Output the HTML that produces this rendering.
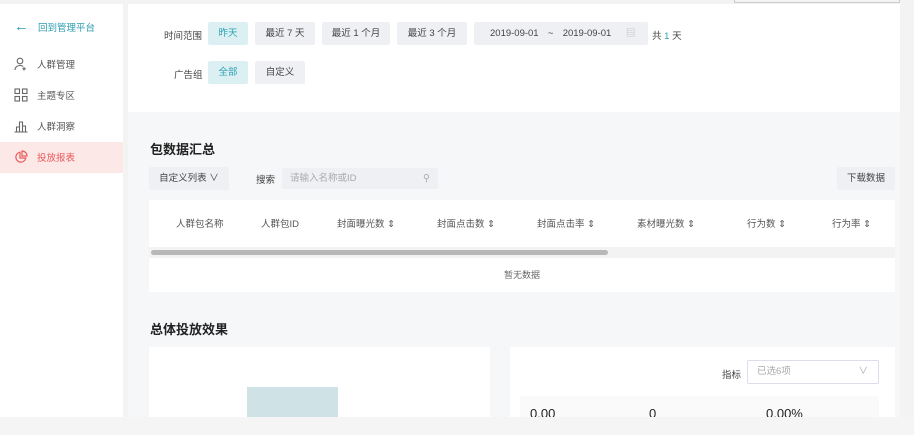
<!DOCTYPE html>
<html><head><meta charset="utf-8"><style>
*{margin:0;padding:0;box-sizing:border-box}
body{width:914px;height:435px;overflow:hidden;background:#f5f6f8;font-family:"Liberation Sans","Noto Sans CJK SC",sans-serif;font-size:10px;color:#333;position:relative}
.a{position:absolute}
.side{left:0;top:4px;width:123px;height:413px;background:#fff}
.nav{position:absolute;left:14px;font-size:9.5px;color:#555;display:flex;align-items:center;gap:9px}
.top{left:128px;top:4px;width:772px;height:108px;background:#fff}
.btn{position:absolute;height:23px;line-height:23px;background:#eef0f4;border-radius:2px;color:#444;font-size:9.5px;text-align:center}
.on{background:#dcf0f3;color:#2aa2b4}
.lbl{position:absolute;font-size:9.5px;color:#444}
.gray{left:128px;top:112px;width:772px;height:305px;background:#f6f7f9}
.card{background:#fff}
.th{position:absolute;top:216px;font-size:9.5px;color:#555}
.bottom{left:0;top:417px;width:914px;height:18px;background:#f5f5f5}
</style></head><body>
<div class="a" style="left:0;top:0;width:914px;height:4px;background:#f3f3f3"></div>
<div class="a" style="left:734px;top:0;width:166px;height:3px;border:1px solid #ccc;border-top:none"></div>
<div class="a side">
 <div class="nav" style="top:14px;color:#2a9bb0"><span style="font-size:15px">←</span>回到管理平台</div>
 <div class="nav" style="top:53px"><svg width="14" height="14" viewBox="0 0 14 14" fill="none" stroke="#666" stroke-width="1.1"><circle cx="6" cy="4" r="2.8"/><path d="M1 13c0-3 2.3-4.5 5-4.5 1.5 0 2.5.4 3.2 1M10 10v3.5M8.3 11.8h3.5"/></svg>人群管理</div>
 <div class="nav" style="top:84px"><svg width="14" height="14" viewBox="0 0 14 14" fill="none" stroke="#666" stroke-width="1.1"><rect x="1" y="1" width="4.5" height="4.5"/><rect x="8.5" y="1" width="4.5" height="4.5"/><rect x="1" y="8.5" width="4.5" height="4.5"/><rect x="8.5" y="8.5" width="4.5" height="4.5"/></svg>主题专区</div>
 <div class="nav" style="top:115px"><svg width="14" height="14" viewBox="0 0 14 14" fill="none" stroke="#666" stroke-width="1.1"><path d="M0.5 13h13M2.5 13V8h3v5M5.5 13V3h3v10M8.5 13V7h3v6"/></svg>人群洞察</div>
 <div class="a" style="left:0;top:138px;width:123px;height:31px;background:#fde8e8"></div>
 <div class="nav" style="top:146px;color:#e85a5a"><svg width="14" height="14" viewBox="0 0 14 14" fill="none" stroke="#e85a5a" stroke-width="1.2"><path d="M6 2.2A5 5 0 1 0 11.8 8H6z"/><path d="M8 1v5h5A5 5 0 0 0 8 1z"/></svg>投放报表</div>
</div>
<div class="a" style="left:123px;top:4px;width:5px;height:413px;background:#f3f3f3"></div>
<div class="a top"></div>
<div class="lbl" style="left:164px;top:28px">时间范围</div>
<div class="btn on" style="left:208px;top:22px;width:40px">昨天</div>
<div class="btn" style="left:255px;top:22px;width:60px">最近 7 天</div>
<div class="btn" style="left:322px;top:22px;width:68px">最近 1 个月</div>
<div class="btn" style="left:397px;top:22px;width:70px">最近 3 个月</div>
<div class="btn" style="left:474px;top:22px;width:174px;text-align:left;padding-left:16px;word-spacing:2px">2019-09-01 &nbsp;~ &nbsp;2019-09-01 <span style="color:#bbb;margin-left:10px">▤</span></div>
<div class="lbl" style="left:652px;top:28px">共<span style="color:#2aa2b4"> 1 </span>天</div>
<div class="lbl" style="left:174px;top:67px">广告组</div>
<div class="btn on" style="left:208px;top:61px;width:40px">全部</div>
<div class="btn" style="left:255px;top:61px;width:50px">自定义</div>
<div class="a gray"></div>
<div class="a" style="left:900px;top:4px;width:14px;height:413px;background:#f3f3f3"></div>
<div class="a" style="left:150px;top:139px;font-size:13px;font-weight:bold;color:#222">包数据汇总</div>
<div class="btn" style="left:149px;top:167px;width:80px">自定义列表 ∨</div>
<div class="lbl" style="left:256px;top:172px">搜索</div>
<div class="btn" style="left:282px;top:168px;width:156px;height:21px;line-height:21px;text-align:left;padding-left:8px;color:#aaa">请输入名称或ID<span style="position:absolute;right:8px">⚲</span></div>
<div class="btn" style="left:837px;top:167px;width:58px">下载数据</div>
<div class="a card" style="left:149px;top:200px;width:746px;height:47px"></div>
<div class="th" style="left:176px">人群包名称</div>
<div class="th" style="left:261px">人群包ID</div>
<div class="th" style="left:337px">封面曝光数 ⇕</div>
<div class="th" style="left:437px">封面点击数 ⇕</div>
<div class="th" style="left:537px">封面点击率 ⇕</div>
<div class="th" style="left:637px">素材曝光数 ⇕</div>
<div class="th" style="left:747px">行为数 ⇕</div>
<div class="th" style="left:832px">行为率 ⇕</div>
<div class="a" style="left:149px;top:247px;width:746px;height:11px;background:#f3f3f3"></div>
<div class="a" style="left:151px;top:250px;width:457px;height:5px;background:#b8b8b8;border-radius:3px"></div>
<div class="a card" style="left:149px;top:258px;width:746px;height:34px;text-align:center;line-height:34px;font-size:9px;color:#666">暂无数据</div>
<div class="a" style="left:150px;top:319px;font-size:13px;font-weight:bold;color:#222">总体投放效果</div>
<div class="a card" style="left:149px;top:347px;width:341px;height:70px"></div>
<div class="a" style="left:247px;top:387px;width:91px;height:30px;background:#cfe3e6"></div>
<div class="a card" style="left:510px;top:347px;width:385px;height:70px"></div>
<div class="a" style="left:520px;top:396px;width:359px;height:21px;background:#fafafa"></div>
<div class="lbl" style="left:722px;top:367px">指标</div>
<div class="a" style="left:747px;top:360px;width:132px;height:24px;border:1px solid #dde;border-radius:2px;font-size:9.5px;color:#aaa;line-height:22px;padding-left:9px">已选6项<span style="position:absolute;right:10px">∨</span></div>
<div class="a" style="left:530px;top:406px;font-size:13px;color:#222">0.00</div>
<div class="a" style="left:649px;top:406px;font-size:13px;color:#222">0</div>
<div class="a" style="left:766px;top:406px;font-size:13px;color:#222">0.00%</div>
<div class="a bottom"></div>
</body></html>
